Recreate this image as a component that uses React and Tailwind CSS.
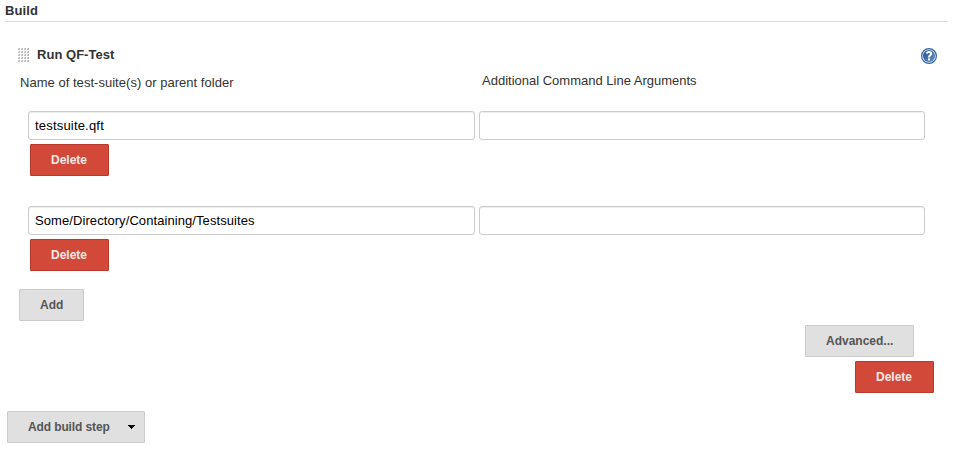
const FONT = "font-['Liberation_Sans',Arial,sans-serif]";

function Button({ danger, className = '', children }) {
  const tone = danger
    ? 'border-[#b93a2c] bg-[#d24939] text-[#f4e9e8]'
    : 'border-[#cccccc] bg-[#e0e0e0] text-[#555555]';
  return (
    <button
      type="button"
      className={`flex h-8 items-center rounded-[1px] border pl-5 text-[12px] leading-none font-bold whitespace-nowrap ${tone} ${className}`}
    >
      {children}
    </button>
  );
}

function Field({ value, label, className }) {
  return (
    <input
      type="text"
      aria-label={label}
      defaultValue={value}
      className={`h-[29px] rounded-[3px] border border-[#cccccc] bg-white px-1.5 text-[13px] text-black shadow-[inset_0_1px_1px_rgba(0,0,0,0.075)] outline-none ${className}`}
    />
  );
}

function SuiteRow({ suite, tracking }) {
  return (
    <div className="pl-7">
      <div className="flex gap-1">
        <Field label="Test-suite" value={suite} className={`w-[447px] ${tracking}`} />
        <Field label="Arguments" value="" className="w-[446px]" />
      </div>
      <Button danger className="mt-1 ml-0.5 w-[79px]">Delete</Button>
    </div>
  );
}

function Grip() {
  const rows = [0, 3, 6, 9, 12];
  const cols = [0, 3, 6, 9];
  return (
    <svg width="12" height="15" viewBox="0 0 12 15" shapeRendering="crispEdges">
      {rows.map((y) =>
        cols.map((x) => (
          <g key={`${x}-${y}`}>
            <rect x={x} y={y} width="2" height="2" fill="#dedcda" />
            <rect x={x + 1} y={y} width="1" height="1" fill="#b4b2b0" />
            <rect x={x} y={y + 1} width="2" height="1" fill="#c4c2c0" />
          </g>
        )),
      )}
    </svg>
  );
}

function HelpIcon() {
  return (
    <svg width="16" height="16" viewBox="0 0 16 16">
      <defs>
        <linearGradient id="help-fill" x1="0" y1="0" x2="1" y2="1">
          <stop offset="0" stopColor="#204a87" />
          <stop offset="1" stopColor="#6d95c8" />
        </linearGradient>
      </defs>
      <circle cx="8" cy="8" r="7.4" fill="#e6eef7" stroke="#3465a4" strokeWidth="1.2" />
      <circle cx="8" cy="8" r="6" fill="url(#help-fill)" />
      <path
        d="M5.5 5.4C6 4.5 6.9 4.1 8 4.1C9.4 4.1 10.2 4.8 10.2 5.8C10.2 7.4 8 7.3 8 9.4"
        fill="none"
        stroke="#ffffff"
        strokeWidth="2"
      />
      <rect x="7" y="10.4" width="2" height="2" fill="#ffffff" />
    </svg>
  );
}

export default function App() {
  return (
    <main className={`flex h-[451px] w-[954px] flex-col bg-white text-[13px] text-[#333333] ${FONT}`}>
      <h2 className="mr-[6px] ml-[5px] h-[22px] border-b border-[#dddddd] pt-[3px] leading-[15px] font-bold tracking-[0.1px]">
        Build
      </h2>

      <header className="mt-[25px] flex h-5 items-start pr-[17px] pl-[18px]">
        <span className="mt-px"><Grip /></span>
        <h3 className="ml-[7px] leading-[15px] font-bold tracking-[0.03px]">Run QF-Test</h3>
        <span className="mt-px ml-auto"><HelpIcon /></span>
      </header>

      <div className="mt-1.5 flex h-[38px] items-start pl-5 leading-[15px]">
        <span className="mt-0.5 w-[462px] tracking-[0.03px]">Name of test-suite(s) or parent folder</span>
        <span>Additional Command Line Arguments</span>
      </div>

      <div className="flex flex-col gap-[30px]">
        <SuiteRow suite="testsuite.qft" tracking="tracking-[0.19px]" />
        <SuiteRow suite="Some/Directory/Containing/Testsuites" tracking="tracking-[0.08px]" />
      </div>

      <Button className="mt-[18px] ml-[19px] w-[65px]">Add</Button>

      <div className="mt-1 flex flex-col items-end gap-1 pr-5">
        <Button className="mr-5 w-[109px]">Advanced...</Button>
        <Button danger className="w-[79px]">Delete</Button>
      </div>

      <Button className="mt-[18px] ml-[7px] w-[138px] justify-between pr-[9px]">
        <span className="tracking-[-0.12px]">Add build step</span>
        <svg width="7" height="4" viewBox="0 0 7 4" shapeRendering="crispEdges">
          <path d="M0 0H7V1H6V2H5V3H4V4H3V3H2V2H1V1H0Z" fill="#000000" />
        </svg>
      </Button>
    </main>
  );
}
